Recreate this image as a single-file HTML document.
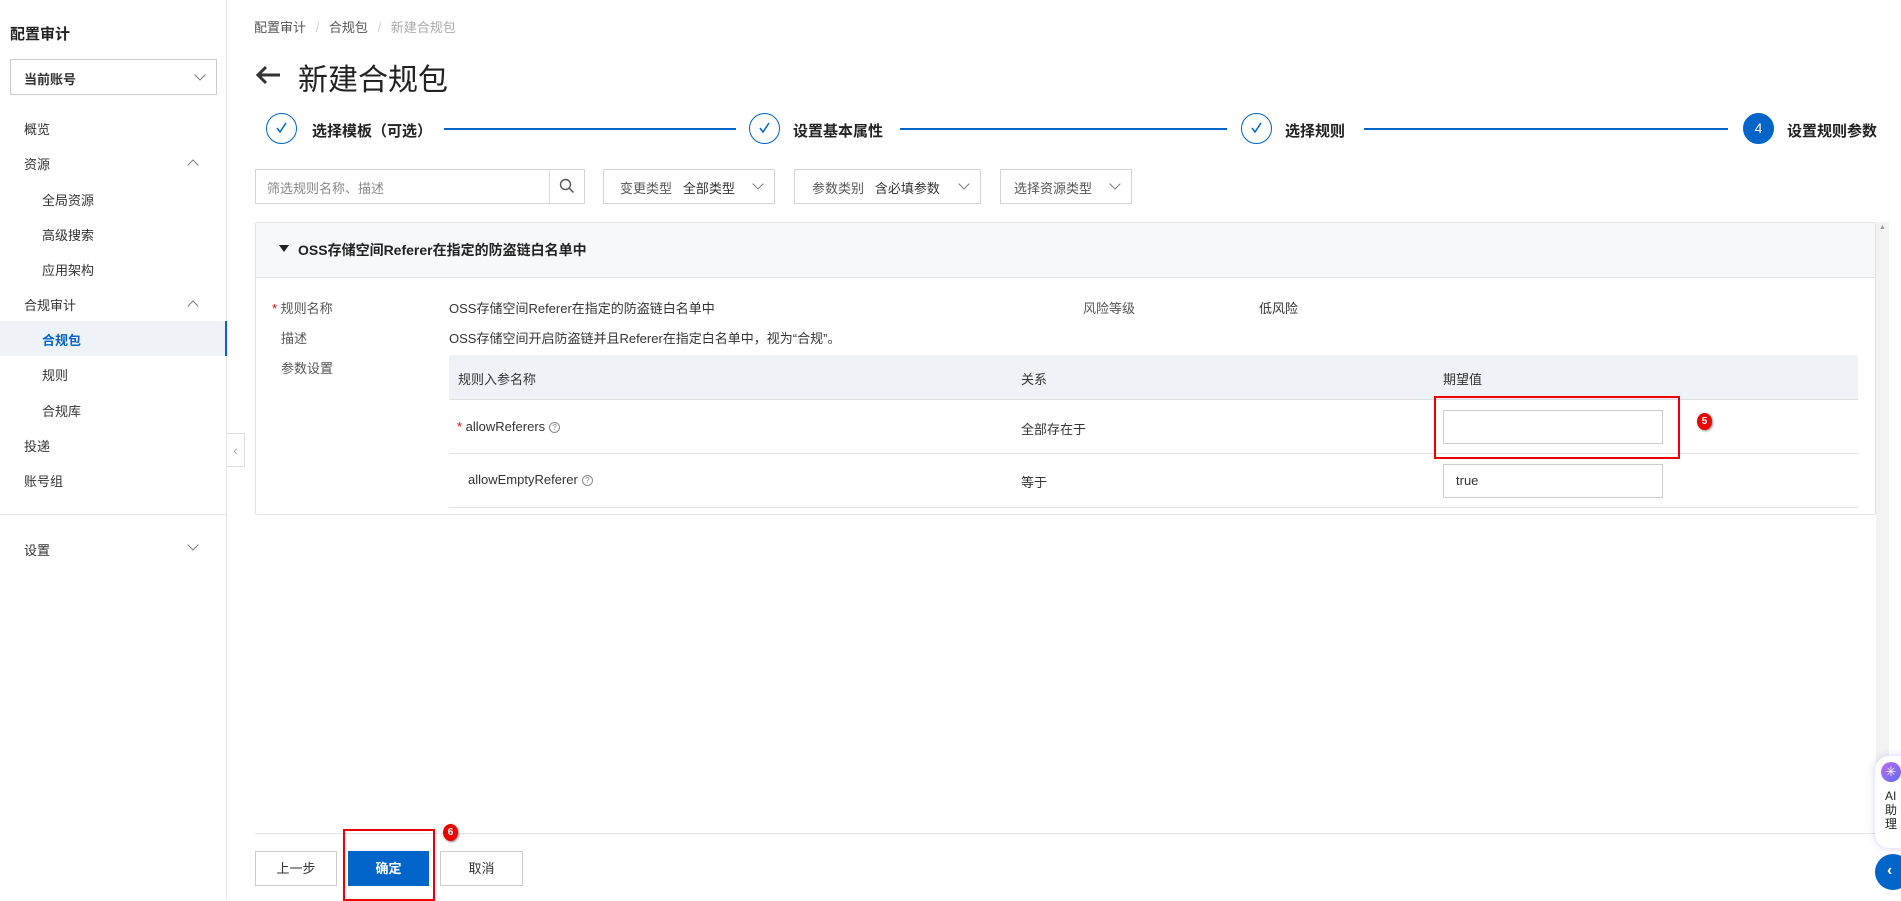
<!DOCTYPE html>
<html><head><meta charset="utf-8"><style>
*{margin:0;padding:0;box-sizing:border-box}
body{width:1901px;height:899px;overflow:hidden;background:#fff;font-family:"Liberation Sans","Noto Sans CJK SC",sans-serif;color:#333;font-size:13px;position:relative}
.a{position:absolute;white-space:nowrap}
.side{position:absolute;left:0;top:0;width:227px;height:899px;border-right:1px solid #e5e5e5;background:#fff}
.chev{position:absolute;width:8px;height:8px;border-left:1.2px solid #777;border-top:1.2px solid #777}
.up{transform:rotate(45deg)}
.dn{transform:rotate(225deg)}
.circ{position:absolute;width:31px;height:31px;border-radius:50%;border:1.5px solid #0064c8;text-align:center;line-height:28px;color:#0064c8;font-size:14px}
.circ svg{position:absolute;left:8px;top:8px}
.line{position:absolute;height:2px;background:#0064c8;top:128px}
.stl{position:absolute;top:120px;font-size:15px;font-weight:bold;color:#222}
.box{position:absolute;border:1px solid #d4d4d4;background:#fff}
.red{position:absolute;border:2px solid #e00}
.badge{position:absolute;width:15px;height:17px;border-radius:50%;background:#e00;color:#fff;font-size:10px;font-weight:bold;text-align:center;line-height:17px;box-shadow:1px 1px 2px #888}
.btn{position:absolute;top:851px;height:35px;border:1px solid #ccc;background:#fff;text-align:center;line-height:33px;font-size:13px;color:#333}
.q{display:inline-block;width:11px;height:11px;border:1px solid #888;border-radius:50%;font-size:8px;line-height:9px;text-align:center;color:#888;vertical-align:middle;margin-left:4px}
</style></head><body>
<div class="side">
<div class="a" style="left:10px;top:23px;font-size:15px;font-weight:bold;color:#222">配置审计</div>
<div class="box" style="left:10px;top:59px;width:207px;height:36px;border-color:#ccc"></div>
<div class="a" style="left:24px;top:69px;font-size:13px;font-weight:bold;color:#333">当前账号</div>
<div class="chev dn" style="left:196px;top:71px"></div>
<div class="a" style="left:24px;top:119px">概览</div>
<div class="a" style="left:24px;top:154px">资源</div><div class="chev up" style="left:189px;top:161px"></div>
<div class="a" style="left:42px;top:190px">全局资源</div>
<div class="a" style="left:42px;top:225px">高级搜索</div>
<div class="a" style="left:42px;top:260px">应用架构</div>
<div class="a" style="left:24px;top:295px">合规审计</div><div class="chev up" style="left:189px;top:302px"></div>
<div style="position:absolute;left:0;top:321px;width:227px;height:35px;background:#eff3f8;border-right:2px solid #0064c8"></div>
<div class="a" style="left:42px;top:330px;color:#0064c8;font-weight:bold">合规包</div>
<div class="a" style="left:42px;top:365px">规则</div>
<div class="a" style="left:42px;top:401px">合规库</div>
<div class="a" style="left:24px;top:436px">投递</div>
<div class="a" style="left:24px;top:471px">账号组</div>
<div style="position:absolute;left:0;top:514px;width:227px;height:1px;background:#e5e5e5"></div>
<div class="a" style="left:24px;top:540px">设置</div><div class="chev dn" style="left:189px;top:541px"></div>
</div>
<div style="position:absolute;left:227px;top:433px;width:18px;height:34px;border:1px solid #ddd;border-left:none;background:#fff;color:#aaa;font-size:14px;text-align:center;line-height:32px">‹</div>

<div class="a" style="left:254px;top:17px;font-size:13px;color:#555">配置审计 <span style="color:#ccc;margin:0 6px">/</span> 合规包 <span style="color:#ccc;margin:0 6px">/</span> <span style="color:#aaa">新建合规包</span></div>
<svg class="a" style="left:254px;top:64px" width="28" height="22" viewBox="0 0 28 22"><path d="M26 11H4M12 3L4 11l8 8" fill="none" stroke="#333" stroke-width="3"/></svg>
<div class="a" style="left:298px;top:55px;font-size:30px;color:#222">新建合规包</div>

<div class="circ" style="left:266px;top:113px"><svg width="13" height="13" viewBox="0 0 13 13"><path d="M2 6l3 4 6-9" fill="none" stroke="#0064c8" stroke-width="1.5"/></svg></div><div class="stl" style="left:312px">选择模板（可选）</div>
<div class="line" style="left:444px;width:292px"></div>
<div class="circ" style="left:749px;top:113px"><svg width="13" height="13" viewBox="0 0 13 13"><path d="M2 6l3 4 6-9" fill="none" stroke="#0064c8" stroke-width="1.5"/></svg></div><div class="stl" style="left:793px">设置基本属性</div>
<div class="line" style="left:900px;width:327px"></div>
<div class="circ" style="left:1241px;top:113px"><svg width="13" height="13" viewBox="0 0 13 13"><path d="M2 6l3 4 6-9" fill="none" stroke="#0064c8" stroke-width="1.5"/></svg></div><div class="stl" style="left:1285px">选择规则</div>
<div class="line" style="left:1364px;width:364px"></div>
<div class="circ" style="left:1743px;top:113px;background:#0064c8;color:#fff">4</div><div class="stl" style="left:1787px">设置规则参数</div>

<div class="box" style="left:255px;top:169px;width:330px;height:35px"></div>
<div style="position:absolute;left:549px;top:170px;width:1px;height:33px;background:#ddd"></div>
<div class="a" style="left:267px;top:178px;color:#888">筛选规则名称、描述</div>
<svg class="a" style="left:559px;top:178px" width="16" height="16" viewBox="0 0 16 16"><circle cx="6.5" cy="6.5" r="5" fill="none" stroke="#555" stroke-width="1.4"/><path d="M10 10l4.5 4.5" stroke="#555" stroke-width="1.5"/></svg>
<div class="box" style="left:603px;top:169px;width:172px;height:35px"></div>
<div class="a" style="left:620px;top:178px;color:#555">变更类型&nbsp;&nbsp;&nbsp;<span style="color:#333">全部类型</span></div><div class="chev dn" style="left:754px;top:180px"></div>
<div class="box" style="left:794px;top:169px;width:187px;height:35px"></div>
<div class="a" style="left:812px;top:178px;color:#555">参数类别&nbsp;&nbsp;&nbsp;<span style="color:#333">含必填参数</span></div><div class="chev dn" style="left:960px;top:180px"></div>
<div class="box" style="left:1000px;top:169px;width:132px;height:35px"></div>
<div class="a" style="left:1014px;top:178px;color:#555">选择资源类型</div><div class="chev dn" style="left:1111px;top:180px"></div>

<div style="position:absolute;left:255px;top:222px;width:1621px;height:293px;border:1px solid #e3e3e3;border-radius:2px;background:#fff"></div>
<div style="position:absolute;left:256px;top:223px;width:1619px;height:55px;background:#f7f8fa;border-bottom:1px solid #e3e3e3"></div>
<svg class="a" style="left:279px;top:245px" width="10" height="8" viewBox="0 0 10 8"><path d="M0 0h10L5 7z" fill="#222"/></svg>
<div class="a" style="left:298px;top:240px;font-size:14px;font-weight:bold;color:#222">OSS存储空间Referer在指定的防盗链白名单中</div>
<div style="position:absolute;left:1876px;top:222px;width:13px;height:610px;background:#f3f3f3"></div>
<div class="a" style="left:1879px;top:224px;font-size:7px;color:#999">▲</div>

<div class="a" style="left:272px;top:298px;color:#555"><span style="color:#e00">*</span> 规则名称</div>
<div class="a" style="left:449px;top:298px">OSS存储空间Referer在指定的防盗链白名单中</div>
<div class="a" style="left:1083px;top:298px;color:#555">风险等级</div>
<div class="a" style="left:1259px;top:298px">低风险</div>
<div class="a" style="left:281px;top:328px;color:#555">描述</div>
<div class="a" style="left:449px;top:328px">OSS存储空间开启防盗链并且Referer在指定白名单中，视为“合规”。</div>
<div class="a" style="left:281px;top:358px;color:#555">参数设置</div>

<div style="position:absolute;left:449px;top:355px;width:1409px;height:45px;background:#eff3f8;border-bottom:1px solid #e0e0e0"></div>
<div class="a" style="left:458px;top:369px;color:#333">规则入参名称</div>
<div class="a" style="left:1021px;top:369px">关系</div>
<div class="a" style="left:1443px;top:369px">期望值</div>
<div style="position:absolute;left:449px;top:453px;width:1409px;height:1px;background:#e0e0e0"></div>
<div style="position:absolute;left:449px;top:507px;width:1409px;height:1px;background:#e0e0e0"></div>
<div class="a" style="left:457px;top:419px"><span style="color:#e00">*</span> allowReferers<span class="q">?</span></div>
<div class="a" style="left:1021px;top:419px">全部存在于</div>
<div class="box" style="left:1443px;top:410px;width:220px;height:34px;border-color:#ccc"></div>
<div class="red" style="left:1434px;top:396px;width:246px;height:63px"></div>
<div class="badge" style="left:1697px;top:413px">5</div>
<div class="a" style="left:468px;top:472px">allowEmptyReferer<span class="q">?</span></div>
<div class="a" style="left:1021px;top:472px">等于</div>
<div class="box" style="left:1443px;top:464px;width:220px;height:34px;border-color:#ccc"></div>
<div class="a" style="left:1456px;top:473px">true</div>

<div style="position:absolute;left:255px;top:833px;width:1621px;height:1px;background:#e3e3e3"></div>
<div class="btn" style="left:255px;width:82px">上一步</div>
<div class="btn" style="left:348px;width:81px;background:#0064c8;border-color:#0064c8;color:#fff;font-weight:bold">确定</div>
<div class="btn" style="left:440px;width:83px">取消</div>
<div class="red" style="left:343px;top:829px;width:92px;height:72px"></div>
<div class="badge" style="left:443px;top:824px">6</div>

<div style="position:absolute;left:1875px;top:756px;width:40px;height:92px;border-radius:14px;background:#fff;box-shadow:0 0 8px rgba(100,100,220,.3)"></div>
<div style="position:absolute;left:1881px;top:762px;width:20px;height:20px;border-radius:50%;background:linear-gradient(135deg,#c06bf0,#5a6cf0);color:#fff;font-size:13px;text-align:center;line-height:20px">✳</div>
<div class="a" style="left:1885px;top:789px;font-size:12px;line-height:14px;color:#222">AI<br>助<br>理</div>
<div style="position:absolute;left:1875px;top:854px;width:36px;height:36px;border-radius:50%;background:#0064c8;color:#fff;font-size:16px;font-weight:bold;line-height:34px;padding-left:12px">‹</div>
</body></html>
